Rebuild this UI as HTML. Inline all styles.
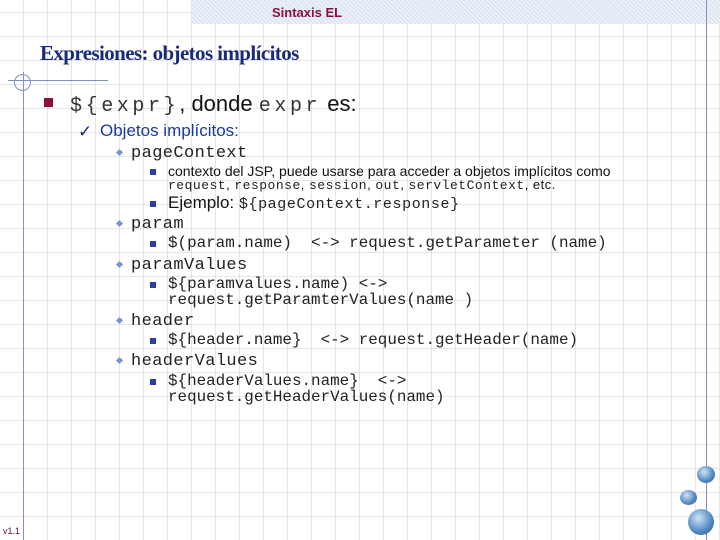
<!DOCTYPE html>
<html><head><meta charset="utf-8"><style>
body{margin:0;width:720px;height:540px;position:relative;overflow:hidden;background:#fff;
background-image:repeating-linear-gradient(90deg,transparent 0 23px,rgba(205,205,205,.5) 23px 24px),repeating-linear-gradient(0deg,transparent 0 23px,rgba(205,205,205,.5) 23px 24px);}
.a{position:absolute;white-space:pre;line-height:1}
.m{font-family:"Liberation Mono",monospace;color:#222}
.s{font-family:"Liberation Sans",sans-serif;color:#111}
.sq{position:absolute;width:6px;height:6px;background:#2a3ea8}
.dm{position:absolute;width:5px;height:5px;background:#8090d0;transform:rotate(45deg)}
</style></head><body>
<div style="position:absolute;left:192px;top:0;width:528px;height:24px;background:#dde6f2;background-image:repeating-linear-gradient(45deg,rgba(255,255,255,.7) 0 1px,transparent 1px 3px)"></div>
<div class="a" style="left:272px;top:5px;font:bold 13px 'Liberation Sans',sans-serif;color:#8a1040">Sintaxis EL</div>
<div style="position:absolute;left:706px;top:0;width:1px;height:540px;background:#8090c0"></div>
<div style="position:absolute;left:8px;top:80px;width:100px;height:1px;background:#8090c0"></div>
<div style="position:absolute;left:23px;top:72px;width:1px;height:468px;background:#8090c0"></div>
<div style="position:absolute;left:14px;top:74px;width:15px;height:15px;border:1px solid #8090c0;border-radius:50%"></div>
<div class="a" style="left:40px;top:41px;font:21px 'Liberation Serif',serif;color:#1a2a7a;font-weight:bold;letter-spacing:-0.6px">Expresiones: objetos implícitos</div>
<div style="position:absolute;left:44px;top:98px;width:9px;height:9px;background:#8a1040"></div>
<div class="a m" style="left:70px;top:93px;font-size:20px;letter-spacing:3.6px;color:#333">${expr}<span class="s" style="font-size:22px;letter-spacing:0">, donde </span>expr<span class="s" style="font-size:22px;letter-spacing:0"> es:</span></div>
<div class="a" style="left:78px;top:122px;font:17px 'DejaVu Sans',sans-serif;color:#1a2a7a">✓</div>
<div class="a s" style="left:100px;top:122px;font-size:17px;color:#1a3a9a">Objetos implícitos:</div>
<div class="dm" style="left:117px;top:150px"></div>
<div class="a m" style="left:131px;top:145px;font-size:17px;letter-spacing:0.4px">pageContext</div>
<div class="sq" style="left:150px;top:169px"></div>
<div class="a s" style="left:168px;top:164px;font-size:14px">contexto del JSP, puede usarse para acceder a objetos implícitos como</div>
<div class="a m" style="left:168px;top:178px;font-size:13px;letter-spacing:0.5px">request<span class="s">, </span>response<span class="s">, </span>session<span class="s">, </span>out<span class="s">, </span>servletContext<span class="s">, etc.</span></div>
<div class="sq" style="left:150px;top:201px"></div>
<div class="a s" style="left:168px;top:194px;font-size:17px">Ejemplo: <span class="m" style="font-size:15px;letter-spacing:0.6px">${pageContext.response}</span></div>
<div class="dm" style="left:117px;top:221px"></div>
<div class="a m" style="left:131px;top:216px;font-size:17px;letter-spacing:0.4px">param</div>
<div class="sq" style="left:150px;top:241px"></div>
<div class="a m" style="left:168px;top:236px;font-size:15.9px">$(param.name)  &lt;-&gt; request.getParameter (name)</div>
<div class="dm" style="left:117px;top:262px"></div>
<div class="a m" style="left:131px;top:257px;font-size:17px;letter-spacing:0.4px">paramValues</div>
<div class="sq" style="left:150px;top:282px"></div>
<div class="a m" style="left:168px;top:277px;font-size:15.9px">${paramvalues.name) &lt;-&gt;</div>
<div class="a m" style="left:168px;top:293px;font-size:15.9px">request.getParamterValues(name )</div>
<div class="dm" style="left:117px;top:318px"></div>
<div class="a m" style="left:131px;top:313px;font-size:17px;letter-spacing:0.4px">header</div>
<div class="sq" style="left:150px;top:338px"></div>
<div class="a m" style="left:168px;top:333px;font-size:15.9px">${header.name}  &lt;-&gt; request.getHeader(name)</div>
<div class="dm" style="left:117px;top:358px"></div>
<div class="a m" style="left:131px;top:353px;font-size:17px;letter-spacing:0.4px">headerValues</div>
<div class="sq" style="left:150px;top:379px"></div>
<div class="a m" style="left:168px;top:374px;font-size:15.9px">${headerValues.name}  &lt;-&gt;</div>
<div class="a m" style="left:168px;top:390px;font-size:15.9px">request.getHeaderValues(name)</div>
<div style="position:absolute;left:697px;top:466px;width:18px;height:17px;border-radius:50%;background:radial-gradient(circle at 40% 35%,#cfe3f7,#4f86c0 60%,#2c5c94)"></div>
<div style="position:absolute;left:680px;top:490px;width:17px;height:15px;border-radius:50%;background:radial-gradient(circle at 40% 35%,#cfe3f7,#4f86c0 60%,#2c5c94)"></div>
<div style="position:absolute;left:688px;top:509px;width:26px;height:26px;border-radius:50%;background:radial-gradient(circle at 40% 35%,#cfe3f7,#4f86c0 60%,#2c5c94)"></div>
<div class="a s" style="left:3px;top:527px;font-size:9px;color:#5a1040">v1.1</div>
</body></html>
